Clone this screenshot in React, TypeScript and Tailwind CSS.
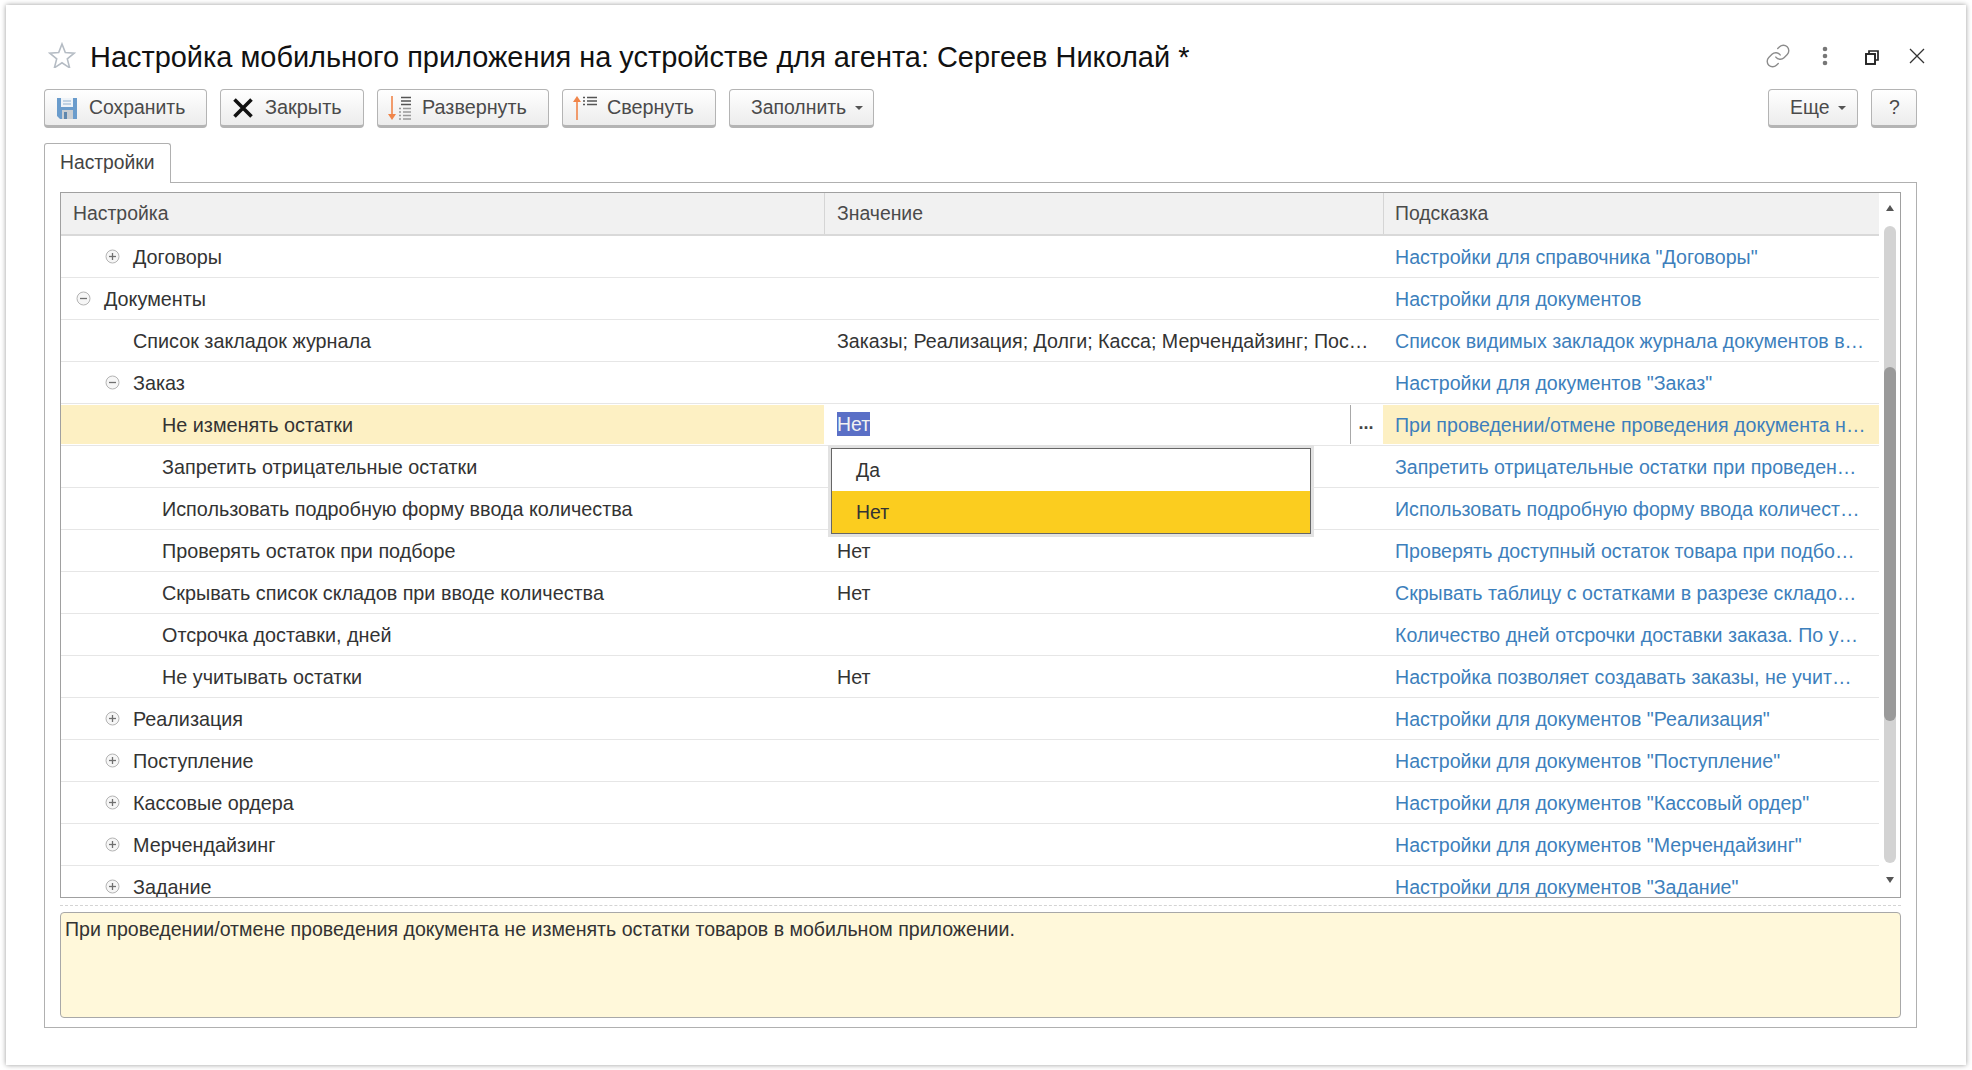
import React from "react";

const font = { fontFamily: '"Liberation Sans", Arial, sans-serif' };

type Row = { name: string; level: 0 | 1 | 2; icon?: "plus" | "minus"; value?: string; hint: string };

const rows: Row[] = [
  { name: "Договоры", level: 1, icon: "plus", hint: 'Настройки для справочника "Договоры"' },
  { name: "Документы", level: 0, icon: "minus", hint: "Настройки для документов" },
  { name: "Список закладок журнала", level: 1, value: "Заказы; Реализация; Долги; Касса; Мерчендайзинг; Пос…", hint: "Список видимых закладок журнала документов в…" },
  { name: "Заказ", level: 1, icon: "minus", hint: 'Настройки для документов "Заказ"' },
  { name: "Не изменять остатки", level: 2, value: "Нет", hint: "При проведении/отмене проведения документа н…" },
  { name: "Запретить отрицательные остатки", level: 2, hint: "Запретить отрицательные остатки при проведен…" },
  { name: "Использовать подробную форму ввода количества", level: 2, hint: "Использовать подробную форму ввода количест…" },
  { name: "Проверять остаток при подборе", level: 2, value: "Нет", hint: "Проверять доступный остаток товара при подбо…" },
  { name: "Скрывать список складов при вводе количества", level: 2, value: "Нет", hint: "Скрывать таблицу с остатками в разрезе складо…" },
  { name: "Отсрочка доставки, дней", level: 2, hint: "Количество дней отсрочки доставки заказа. По у…" },
  { name: "Не учитывать остатки", level: 2, value: "Нет", hint: "Настройка позволяет создавать заказы, не учит…" },
  { name: "Реализация", level: 1, icon: "plus", hint: 'Настройки для документов "Реализация"' },
  { name: "Поступление", level: 1, icon: "plus", hint: 'Настройки для документов "Поступление"' },
  { name: "Кассовые ордера", level: 1, icon: "plus", hint: 'Настройки для документов "Кассовый ордер"' },
  { name: "Мерчендайзинг", level: 1, icon: "plus", hint: 'Настройки для документов "Мерчендайзинг"' },
  { name: "Задание", level: 1, icon: "plus", hint: 'Настройки для документов "Задание"' },
];

function TreeIcon({ kind }: { kind: "plus" | "minus" }) {
  return (
    <svg width="15" height="15" viewBox="0 0 15 15" className="shrink-0">
      <circle cx="7.5" cy="7.5" r="6.5" fill="#f6f6f6" stroke="#b4b4b4" />
      <path d="M4 7.5h7" stroke="#707070" strokeWidth="1.3" />
      {kind === "plus" && <path d="M7.5 4v7" stroke="#707070" strokeWidth="1.3" />}
    </svg>
  );
}

function SaveIcon() {
  return (
    <svg width="20" height="21" viewBox="0 0 20 21" className="shrink-0">
      <path d="M0 0h20v21H3l-3-3z" fill="#6a9ccc" />
      <rect x="4" y="0" width="12" height="9" fill="#eef3f8" />
      <path d="M6 3h8M6 6h8" stroke="#8fb0cf" strokeWidth="1" />
      <rect x="5" y="12" width="11" height="9" fill="#c9ced3" />
      <rect x="7" y="14" width="3" height="7" fill="#5f87ad" />
    </svg>
  );
}

function CloseBold() {
  return (
    <svg width="20" height="20" viewBox="0 0 20 20" className="shrink-0">
      <path d="M1.500 1.500l17 17M18.500 1.500l-17 17" stroke="#111" strokeWidth="3.6" />
    </svg>
  );
}

function ExpandIcon() {
  return (
    <svg width="24" height="24" viewBox="0 0 24 24" className="shrink-0">
      <path d="M4 0v21" stroke="#f0854a" strokeWidth="1.6" />
      <path d="M0 18l4 6 4-6z" fill="#f0854a" />
      <path d="M13 1.5h10M13 5h10M13 8.500h10" stroke="#555" strokeWidth="1.6" />
      <path d="M11 12.500h2M15 12.500h8M11 16h2M15 16h8M11 19.500h2M15 19.500h8M11 23h2M15 23h8" stroke="#999" strokeWidth="1.4" />
    </svg>
  );
}

function CollapseIcon() {
  return (
    <svg width="24" height="24" viewBox="0 0 24 24" className="shrink-0">
      <path d="M4 3v21" stroke="#f0854a" strokeWidth="1.6" />
      <path d="M0 6l4-6 4 6z" fill="#f0854a" />
      <path d="M14 1.500h10M14 5h10M14 8.500h10" stroke="#555" strokeWidth="1.6" />
      <path d="M10 1.500h2M10 5h2M10 8.500h2" stroke="#555" strokeWidth="1.6" />
    </svg>
  );
}

function Caret() {
  return <span className="ml-[9px] inline-block w-0 h-0 border-x-[4px] border-x-transparent border-t-[4px] border-t-[#555]" />;
}

function Button({ w, pl, children }: { w: string; pl: string; children: React.ReactNode }) {
  return (
    <div
      className={`${w} ${pl} h-[39px] pt-[1px] shrink-0 flex items-center rounded-[4px] border border-b-[3px] border-[#b4b4b4] bg-gradient-to-b from-white to-[#ececec] text-[19.4px] text-[#4a4a4a]`}
    >
      {children}
    </div>
  );
}

function TableRow({ row, index }: { row: Row; index: number }) {
  const selected = index === 4;
  const indent = row.level === 2 ? "pl-[101px]" : row.level === 1 ? (row.icon ? "pl-[44px]" : "pl-[72px]") : "pl-[15px]";
  return (
    <div className="grid grid-cols-[763px_559px_496px] h-[42px] shrink-0 border-b border-[#e6e6e6] text-[#333]">
      <div className={`flex items-center pt-[2px] text-[19.8px] ${indent} ${selected ? "bg-[#fdf0c3] my-[1px]" : ""}`}>
        {row.icon && (
          <span className="flex items-center w-[28px] pb-[2px]">
            <TreeIcon kind={row.icon} />
          </span>
        )}
        <span>{row.name}</span>
      </div>
      {selected ? (
        <div className="flex items-center my-[1px]">
          <div className="flex-1 pl-[13px] text-[19.4px]">
            <span className="inline-block bg-[#5a6fc6] text-[#f2f2f2] leading-[24px]">Нет</span>
          </div>
          <div className="w-[33px] h-full border-l border-[#a8a8a8] flex items-center justify-center text-[18px] font-bold text-[#444] pb-[3px] pr-[2px]">...</div>
        </div>
      ) : (
        <div className="flex items-center min-w-0 pt-[2px] pl-[13px] text-[19.64px] whitespace-nowrap">
          {row.value ?? ""}
        </div>
      )}
      <div className={`flex items-center min-w-0 pt-[2px] pl-[12px] text-[19.6px] whitespace-nowrap text-[#3d7fbc] ${selected ? "bg-[#fdf0c3] my-[1px]" : ""}`}>
        {row.hint}
      </div>
    </div>
  );
}

export default function App() {
  return (
    <div className="w-[1972px] h-[1070px] bg-white pt-[5px] pb-[5px] px-[6px] overflow-hidden" style={font}>
      <div className="h-full bg-white shadow-[0_0_5px_rgba(0,0,0,0.4)] flex flex-col pl-[38px] pr-[49px]">
        {/* Title */}
        <div className="h-[84px] shrink-0 flex items-center pt-[21px] -mr-[8px]">
          <svg width="28" height="26" viewBox="0 0 28 26" className="ml-[4px] shrink-0 mb-[5px]">
            <path d="M14 2l3.300 8.600 9 .5-7 5.800 2.300 8.900L14 20.800 6.400 25.800l2.300-8.900-7-5.800 9-.5z" fill="none" stroke="#b5bcc4" strokeWidth="1.6" />
          </svg>
          <div className="ml-[14px] text-[28.93px] text-[#111] whitespace-nowrap flex-1">
            Настройка мобильного приложения на устройстве для агента: Сергеев Николай *
          </div>
          <div className="flex items-center">
            <svg width="26" height="26" viewBox="0 0 24 24" fill="none" stroke="#8c8c8c" strokeWidth="1.3" strokeLinecap="round" strokeLinejoin="round" className="shrink-0 mb-[4px]">
              <path d="M10 13a5 5 0 0 0 7.540.54l3-3a5 5 0 0 0-7.070-7.070l-1.720 1.710" />
              <path d="M14 11a5 5 0 0 0-7.540-.54l-3 3a5 5 0 0 0 7.070 7.070l1.710-1.710" />
            </svg>
            <svg width="8" height="20" viewBox="0 0 8 20" className="ml-[30px] shrink-0 mb-[3px]">
              <circle cx="4" cy="3" r="2.300" fill="#777" />
              <circle cx="4" cy="10" r="2.300" fill="#777" />
              <circle cx="4" cy="17" r="2.300" fill="#777" />
            </svg>
            <svg width="14" height="15" viewBox="0 0 14 15" className="ml-[36px] shrink-0">
              <path d="M4 3V1h9v9h-2" fill="none" stroke="#222" strokeWidth="1.7" />
              <rect x="1" y="4" width="9" height="10" fill="none" stroke="#222" strokeWidth="1.900" />
            </svg>
            <svg width="16" height="16" viewBox="0 0 16 16" className="ml-[30px] shrink-0 mb-[3px]">
              <path d="M1 1l14 14M15 1L1 15" stroke="#333" strokeWidth="1.3" />
            </svg>
          </div>
        </div>

        {/* Toolbar */}
        <div className="h-[39px] shrink-0 flex gap-[13px]">
          <Button w="w-[163px]" pl="pl-[12px]">
            <SaveIcon />
            <span className="ml-[12px]">Сохранить</span>
          </Button>
          <Button w="w-[144px]" pl="pl-[12px]">
            <CloseBold />
            <span className="ml-[12px] text-[19.9px]">Закрыть</span>
          </Button>
          <Button w="w-[172px]" pl="pl-[10px]">
            <ExpandIcon />
            <span className="ml-[10px] text-[19.8px]">Развернуть</span>
          </Button>
          <Button w="w-[154px]" pl="pl-[10px]">
            <CollapseIcon />
            <span className="ml-[10px] text-[19.8px]">Свернуть</span>
          </Button>
          <Button w="w-[145px]" pl="pl-[21px]">
            <span>Заполнить</span>
            <Caret />
          </Button>
          <div className="flex-1" />
          <Button w="w-[90px]" pl="pl-[21px]">
            <span>Еще</span>
            <Caret />
          </Button>
          <Button w="w-[46px]" pl="pl-[17px]">
            <span>?</span>
          </Button>
        </div>

        {/* Tab */}
        <div className="mt-[15px] relative z-10 -mb-px w-[127px] h-[40px] shrink-0 bg-white border border-b-0 border-[#b0b0b0] rounded-t-[3px] flex items-center pl-[15px] text-[19.3px] text-[#444]">
          Настройки
        </div>

        {/* Panel */}
        <div className="h-[846px] shrink-0 border border-[#b0b0b0] pt-[9px] px-[15px] flex flex-col">
          {/* Table */}
          <div className="relative h-[706px] shrink-0 border border-[#a0a0a0] flex overflow-hidden">
            <div className="w-[1818px] shrink-0 flex flex-col">
              <div className="grid grid-cols-[763px_559px_496px] h-[43px] shrink-0 bg-[#f1f1f1] border-b-2 border-[#d9d9d9] text-[19.4px] text-[#4a4a4a]">
                <div className="flex items-center pl-[12px]">Настройка</div>
                <div className="flex items-center pl-[12px] border-l border-[#d5d5d5]">Значение</div>
                <div className="flex items-center pl-[11px] border-l border-[#d5d5d5]">Подсказка</div>
              </div>
              {rows.map((r, i) => (
                <TableRow key={r.name} row={r} index={i} />
              ))}
            </div>

            {/* Scrollbar */}
            <div className="flex-1 flex flex-col items-center pt-[12px] pb-[14px]">
              <div className="w-0 h-0 border-x-[4px] border-x-transparent border-b-[6px] border-b-[#555] shrink-0" />
              <div className="mt-[15px] mb-[14px] flex-1 w-[12px] rounded-full bg-[#d3d3d3] flex flex-col">
                <div className="mt-[141px] h-[354px] w-full rounded-full bg-[#9a9a9a]" />
              </div>
              <div className="w-0 h-0 border-x-[4px] border-x-transparent border-t-[6px] border-t-[#555] shrink-0" />
            </div>

            {/* Dropdown */}
            <div className="absolute left-[770px] top-[255px] w-[480px] border border-[#666] shadow-[0_0_0_3px_#e2e2e2] bg-white text-[19.4px] text-[#333]">
              <div className="h-[42px] flex items-center pl-[24px] pt-[1px]">Да</div>
              <div className="h-[42px] flex items-center pl-[24px] pt-[1px] bg-[#fbcd1f]">Нет</div>
            </div>
          </div>

          {/* Splitter */}
          <div className="h-[14px] shrink-0 flex items-center">
            <div className="w-full border-t border-dashed border-[#d4d4d4]" />
          </div>

          {/* Note */}
          <div className="h-[106px] shrink-0 bg-[#fff8da] border border-[#a8a8a8] rounded-[4px] pl-[4px] pt-[3px] text-[19.57px] text-[#333] leading-[26px]">
            При проведении/отмене проведения документа не изменять остатки товаров в мобильном приложении.
          </div>
        </div>
      </div>
    </div>
  );
}
